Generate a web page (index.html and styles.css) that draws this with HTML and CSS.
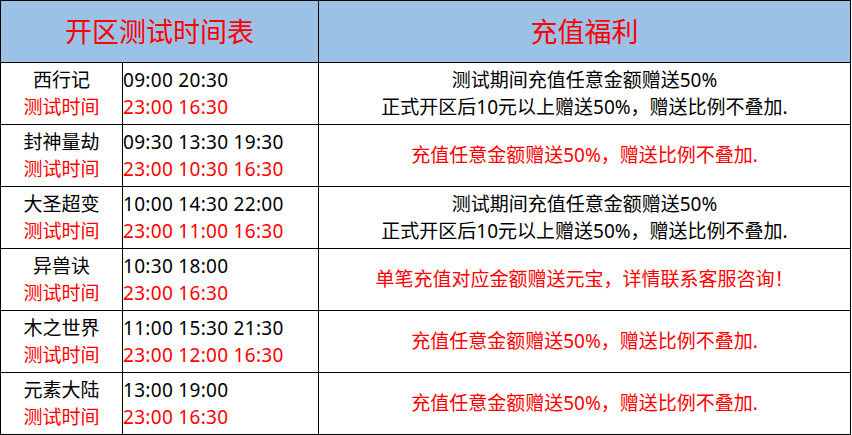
FILE: index.html
```html
<!DOCTYPE html>
<html lang="zh-CN">
<head>
<meta charset="utf-8">
<title>开区测试时间表</title>
<link rel="stylesheet" href="styles.css">
</head>
<body>
<table class="sched">
  <colgroup>
    <col class="c-name">
    <col class="c-time">
    <col class="c-bonus">
  </colgroup>
  <thead>
    <tr class="head">
      <th colspan="2">开区测试时间表</th>
      <th>充值福利</th>
    </tr>
  </thead>
  <tbody>
    <tr>
      <td class="name">西行记<br><span class="red">测试时间</span></td>
      <td class="time">09:00 20:30<br><span class="red">23:00 16:30</span></td>
      <td class="bonus">测试期间充值任意金额赠送50%<br>正式开区后10元以上赠送50%，赠送比例不叠加.</td>
    </tr>
    <tr>
      <td class="name">封神量劫<br><span class="red">测试时间</span></td>
      <td class="time">09:30 13:30 19:30<br><span class="red">23:00 10:30 16:30</span></td>
      <td class="bonus red">充值任意金额赠送50%，赠送比例不叠加.</td>
    </tr>
    <tr>
      <td class="name">大圣超变<br><span class="red">测试时间</span></td>
      <td class="time">10:00 14:30 22:00<br><span class="red">23:00 11:00 16:30</span></td>
      <td class="bonus">测试期间充值任意金额赠送50%<br>正式开区后10元以上赠送50%，赠送比例不叠加.</td>
    </tr>
    <tr>
      <td class="name">异兽诀<br><span class="red">测试时间</span></td>
      <td class="time">10:30 18:00<br><span class="red">23:00 16:30</span></td>
      <td class="bonus red">单笔充值对应金额赠送元宝，详情联系客服咨询！</td>
    </tr>
    <tr>
      <td class="name">木之世界<br><span class="red">测试时间</span></td>
      <td class="time">11:00 15:30 21:30<br><span class="red">23:00 12:00 16:30</span></td>
      <td class="bonus red">充值任意金额赠送50%，赠送比例不叠加.</td>
    </tr>
    <tr>
      <td class="name">元素大陆<br><span class="red">测试时间</span></td>
      <td class="time">13:00 19:00<br><span class="red">23:00 16:30</span></td>
      <td class="bonus red">充值任意金额赠送50%，赠送比例不叠加.</td>
    </tr>
  </tbody>
</table>
</body>
</html>
```
FILE: styles.css
```css
html, body {
  margin: 0;
  padding: 0;
  background: #ffffff;
}
body {
  font-family: "Noto Sans", "Noto Sans CJK SC", sans-serif;
  color: #000;
}
.sched {
  border-collapse: collapse;
  table-layout: fixed;
  width: 850px;
}
.c-name { width: 122px; }
.c-time { width: 196px; }
.c-bonus { width: 532px; }
.sched th,
.sched td {
  border: 1px solid #000;
  padding: 0;
  font-size: 19px;
  line-height: 27px;
  vertical-align: middle;
}
.head th {
  height: 61px;
  background: #9bc2e6;
  color: #ff0000;
  font-size: 27px;
  font-weight: normal;
  text-align: center;
}
.sched tbody tr {
  height: 62px;
}
.name {
  text-align: center;
}
.time {
  text-align: left;
  padding-left: 5px;
  letter-spacing: 0.3px;
}
.bonus {
  text-align: center;
}
.red {
  color: #ff0000;
}
```
